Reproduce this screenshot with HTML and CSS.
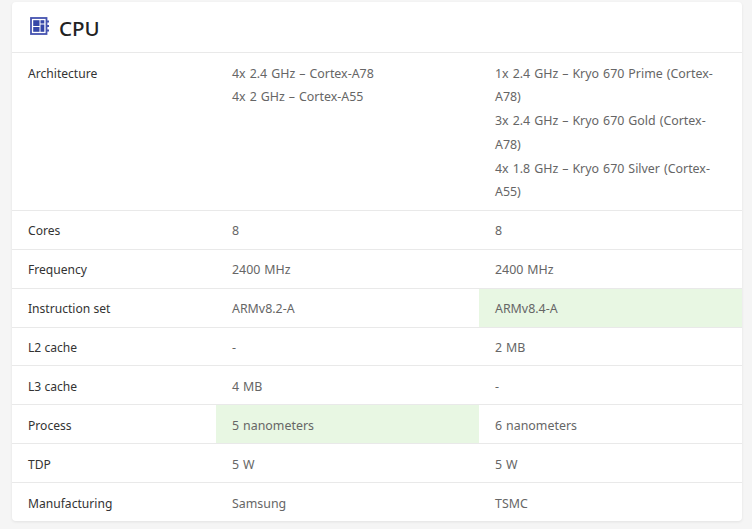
FILE: index.html
```html
<!DOCTYPE html>
<html lang="en">
<head>
<meta charset="utf-8">
<title>CPU</title>
<link rel="stylesheet" href="styles.css">
</head>
<body>
<section class="card">
  <header class="card-head">
    <svg class="icon" width="20" height="19" viewBox="0 0 20 19" aria-hidden="true">
      <rect x="1" y="1" width="15.500" height="16" fill="none" stroke="#4553b0" stroke-width="1.800"/>
      <rect x="3.200" y="3.200" width="6.300" height="5.800" fill="#3647a8"/>
      <rect x="10.500" y="3.200" width="3.800" height="3.300" fill="#3647a8"/>
      <rect x="10.500" y="7.500" width="3.800" height="7.300" fill="#3647a8"/>
      <rect x="3.200" y="10" width="6.300" height="4.800" fill="#3647a8"/>
      <path d="M16.500 4.500h2.500M16.500 9h2.500M16.500 13.500h2.500" stroke="#4553b0" stroke-width="1.800" fill="none"/>
    </svg>
    <h2 class="title">CPU</h2>
  </header>
  <table class="specs">
    <colgroup><col class="col-label"><col class="col-val"><col class="col-val"></colgroup>
    <tbody>
      <tr><th>Architecture</th><td>4x 2.4 GHz – Cortex-A78<br>4x 2 GHz – Cortex-A55</td><td>1x 2.4 GHz – Kryo 670 Prime (Cortex-A78)<br>3x 2.4 GHz – Kryo 670 Gold (Cortex-A78)<br>4x 1.8 GHz – Kryo 670 Silver (Cortex-A55)</td></tr>
      <tr><th>Cores</th><td>8</td><td>8</td></tr>
      <tr><th>Frequency</th><td>2400 MHz</td><td>2400 MHz</td></tr>
      <tr><th>Instruction set</th><td>ARMv8.2-A</td><td class="win">ARMv8.4-A</td></tr>
      <tr><th>L2 cache</th><td>-</td><td>2 MB</td></tr>
      <tr><th>L3 cache</th><td>4 MB</td><td>-</td></tr>
      <tr><th>Process</th><td class="win">5 nanometers</td><td>6 nanometers</td></tr>
      <tr><th>TDP</th><td>5 W</td><td>5 W</td></tr>
      <tr><th>Manufacturing</th><td>Samsung</td><td>TSMC</td></tr>
    </tbody>
  </table>
</section>
</body>
</html>
```
FILE: styles.css
```css
html, body { margin: 0; padding: 0; }
body {
  background: #f5f5f5;
  font-family: "Noto Sans", "Open Sans", sans-serif;
  font-size: 12.400px;
  word-spacing: .8px;
  line-height: 23.800px;
  color: #666;
  padding: 2px 10px 8px 12px;
  height: 519px;
  overflow: hidden;
}
.card {
  background: #fff;
  border-radius: 4px;
  box-shadow: 0 1px 3px rgba(0,0,0,.08);
}
.card-head {
  display: flex;
  align-items: center;
  gap: 9px;
  height: 50px;
  padding-left: 18px;
  border-bottom: 1px solid #e9e9e9;
}
.icon { flex: none; margin-bottom: 1px; }
.title {
  margin: 0 0 -2px;
  font-size: 20.500px;
  font-weight: 500;
  line-height: 1;
  color: #222;
}
.specs {
  width: 100%;
  border-collapse: collapse;
  table-layout: fixed;
}
.col-label { width: 204px; }
.specs th, .specs td {
  padding: 8.500px 16px 5.600px;
  vertical-align: top;
  text-align: left;
  font-weight: 400;
}
.specs tr + tr th, .specs tr + tr td { border-top: 1px solid #e9e9e9; }
.specs th { color: #333; font-size: 12.100px; word-spacing: 0; }
.specs .win { background: #e8f7e3; }
```
